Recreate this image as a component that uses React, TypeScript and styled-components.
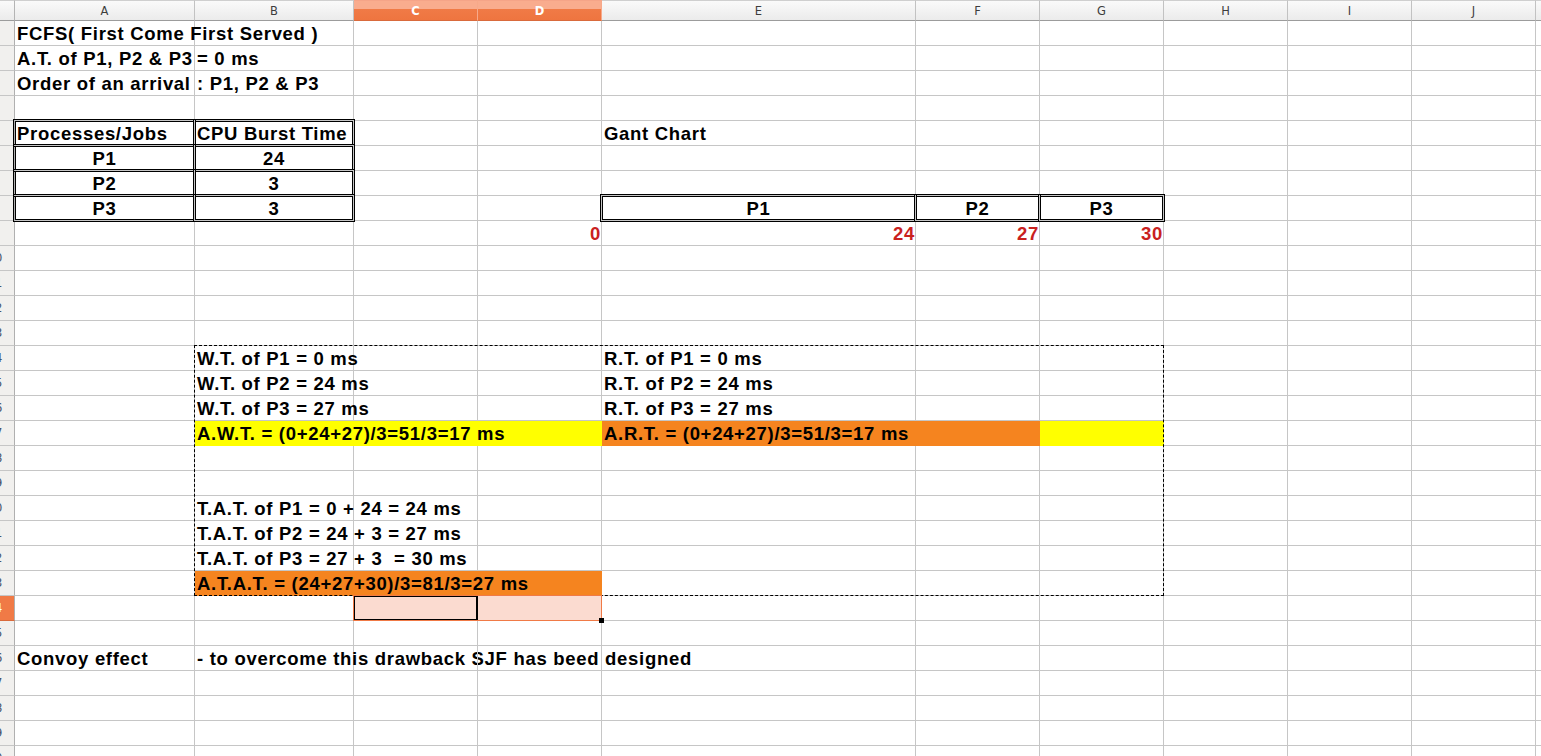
import React from 'react';
import styled, { createGlobalStyle, css } from 'styled-components';

const GRID = '#c6c6c6';
const YELLOW = '#ffff00';
const ORANGE = '#f5841f';
const PINK = '#fbdbd0';
const SEL = '#f07a46';
const RED = '#c9211e';

const COLS = ['A', 'B', 'C', 'D', 'E', 'F', 'G', 'H', 'I', 'J', 'K'];
const WIDTHS = [180, 159, 124, 124, 314, 124, 124, 124, 124, 124, 124];
const ROWS = 30;
const TEMPLATE_COLS = `15px ${WIDTHS.map((w) => `${w}px`).join(' ')}`;
const TEMPLATE_ROWS = `21px repeat(${ROWS}, 25px)`;

type Align = 'left' | 'center' | 'right';
type CellDef = {
  text?: string;
  align?: Align;
  red?: boolean;
  bg?: string;
  span?: number;
  boxed?: boolean;
};

const DATA: Record<string, CellDef> = {
  A1: { text: 'FCFS( First Come First Served )' },
  A2: { text: 'A.T. of P1, P2 & P3' },
  B2: { text: '= 0 ms' },
  A3: { text: 'Order of an arrival' },
  B3: { text: ': P1, P2 & P3' },
  A5: { text: 'Processes/Jobs', boxed: true },
  B5: { text: 'CPU Burst Time', boxed: true },
  E5: { text: 'Gant Chart' },
  A6: { text: 'P1', align: 'center', boxed: true },
  B6: { text: '24', align: 'center', boxed: true },
  A7: { text: 'P2', align: 'center', boxed: true },
  B7: { text: '3', align: 'center', boxed: true },
  A8: { text: 'P3', align: 'center', boxed: true },
  B8: { text: '3', align: 'center', boxed: true },
  E8: { text: 'P1', align: 'center', boxed: true },
  F8: { text: 'P2', align: 'center', boxed: true },
  G8: { text: 'P3', align: 'center', boxed: true },
  D9: { text: '0', align: 'right', red: true },
  E9: { text: '24', align: 'right', red: true },
  F9: { text: '27', align: 'right', red: true },
  G9: { text: '30', align: 'right', red: true },
  B14: { text: 'W.T. of P1 = 0 ms' },
  E14: { text: 'R.T. of P1 = 0 ms' },
  B15: { text: 'W.T. of P2 = 24 ms' },
  E15: { text: 'R.T. of P2 = 24 ms' },
  B16: { text: 'W.T. of P3 = 27 ms' },
  E16: { text: 'R.T. of P3 = 27 ms' },
  B17: { text: 'A.W.T. = (0+24+27)/3=51/3=17 ms', bg: YELLOW, span: 3 },
  E17: { text: 'A.R.T. = (0+24+27)/3=51/3=17 ms', bg: ORANGE, span: 2 },
  G17: { bg: YELLOW },
  B20: { text: 'T.A.T. of P1 = 0 + 24 = 24 ms' },
  B21: { text: 'T.A.T. of P2 = 24 + 3 = 27 ms' },
  B22: { text: 'T.A.T. of P3 = 27 + 3  = 30 ms' },
  B23: { text: 'A.T.A.T. = (24+27+30)/3=81/3=27 ms', bg: ORANGE, span: 3 },
  C24: { bg: PINK },
  D24: { bg: PINK },
  A26: { text: 'Convoy effect' },
  B26: { text: '- to overcome this drawback SJF has beed designed' },
};

const SELECTED_COLS = ['C', 'D'];
const SELECTED_ROW = 24;

const Global = createGlobalStyle`
  *, *::before, *::after { box-sizing: border-box; }
  html, body { margin: 0; padding: 0; background: #fff; overflow: hidden; }
`;

const Window = styled.div`
  display: grid;
  grid-template-columns: 1660px;
  grid-template-rows: 771px;
  width: 1541px;
  height: 756px;
  overflow: hidden;
  background: #fff;
`;

const Sheet = styled.div`
  grid-area: 1 / 1;
  display: grid;
  grid-template-columns: ${TEMPLATE_COLS};
  grid-template-rows: ${TEMPLATE_ROWS};
`;

const Overlay = styled(Sheet)`
  position: relative;
  z-index: 2;
  pointer-events: none;
`;

const Corner = styled.div`
  border-top: 1px solid #cfcfcf;
  border-right: 1px solid #b4b4b4;
  border-bottom: 1px solid #9c9c9c;
  background: linear-gradient(#fafafa, #ebebeb);
`;

const ColHead = styled.div<{ $sel?: boolean }>`
  display: flex;
  align-items: center;
  justify-content: center;
  padding-top: 1px;
  border-top: 1px solid #cfcfcf;
  border-right: 1px solid #c2c2c2;
  border-bottom: 1px solid #9c9c9c;
  background: linear-gradient(#fafafa, #ebebeb);
  font: 11.5px 'DejaVu Sans', sans-serif;
  color: #3d3d3d;
  ${(p) =>
    p.$sel &&
    css`
      background: linear-gradient(#f9ac8e 0, #f9ac8e 8px, #f07a46 8px, #ee7540 100%);
      border-top-color: #f5a488;
      border-right-color: #f7a98a;
      border-bottom-color: #d96a3c;
      color: #fff;
      font-weight: bold;
    `}
`;

const RowHead = styled.div<{ $sel?: boolean }>`
  display: flex;
  align-items: center;
  overflow: hidden;
  background: #f1f0ee;
  border-right: 1px solid #b0b0b0;
  border-bottom: 1px solid ${GRID};
  font: 11.5px 'DejaVu Sans', sans-serif;
  color: #45536b;
  ${(p) =>
    p.$sel &&
    css`
      background: ${SEL};
      border-bottom-color: #d96a3c;
      color: #fff;
    `}
`;

const RowNum = styled.span`
  flex: none;
  width: 40px;
  margin-left: -25px;
  text-align: center;
`;

const Cell = styled.div<{ $span: number; $bg?: string; $align: Align; $boxed?: boolean }>`
  grid-column: span ${(p) => p.$span};
  display: flex;
  align-items: flex-end;
  justify-content: ${(p) =>
    p.$align === 'center' ? 'center' : p.$align === 'right' ? 'flex-end' : 'flex-start'};
  min-width: 0;
  padding: 0 ${(p) => (p.$align === 'right' ? '0' : '2px')} 1px 2px;
  background: ${(p) => p.$bg ?? 'transparent'};
  border-right: 1px solid ${(p) => p.$bg ?? GRID};
  border-bottom: 1px solid ${(p) => p.$bg ?? GRID};
  ${(p) =>
    p.$boxed &&
    css`
      position: relative;
      &::after {
        content: '';
        position: absolute;
        inset: -2px;
        border: 3px double #000;
        pointer-events: none;
      }
    `}
`;

const Text = styled.span<{ $red?: boolean; $clip?: boolean }>`
  flex: none;
  font: bold 18.5px/20px 'Liberation Sans', Arial, sans-serif;
  letter-spacing: 0.7px;
  white-space: pre;
  color: ${(p) => (p.$red ? RED : '#000')};
  ${(p) =>
    p.$clip &&
    css`
      flex: 0 1 auto;
      max-width: 100%;
      overflow: hidden;
    `}
`;

const Marquee = styled.div`
  grid-column: 3 / 9;
  grid-row: 15 / 25;
  margin: -1px 0 0 -1px;
  border: 1px dashed #000;
`;

const Range = styled.div`
  grid-column: 4 / 6;
  grid-row: 25 / 26;
  margin: -1px 0 0 -1px;
  border: 1px solid ${SEL};
  position: relative;
`;

const Handle = styled.span`
  position: absolute;
  right: -3px;
  bottom: -3px;
  width: 5px;
  height: 5px;
  background: #000;
`;

const Cursor = styled.div`
  grid-column: 4 / 5;
  grid-row: 25 / 26;
  margin: -1px 0 0 -1px;
  border: 2px solid #000;
`;

function buildRow(r: number) {
  const out: React.ReactNode[] = [
    <RowHead key={`h${r}`} $sel={r === SELECTED_ROW}>
      <RowNum>{r}</RowNum>
    </RowHead>,
  ];
  let c = 0;
  while (c < COLS.length) {
    const key = `${COLS[c]}${r}`;
    const def = DATA[key] ?? {};
    const span = def.span ?? 1;
    const nextKey = `${COLS[c + span] ?? ''}${r}`;
    const clip = !!DATA[nextKey]?.text;
    out.push(
      <Cell key={key} $span={span} $bg={def.bg} $align={def.align ?? 'left'} $boxed={def.boxed}>
        {def.text ? (
          <Text $red={def.red} $clip={clip}>
            {def.text}
          </Text>
        ) : null}
      </Cell>
    );
    c += span;
  }
  return out;
}

export default function App() {
  return (
    <>
      <Global />
      <Window>
        <Sheet>
          <Corner />
          {COLS.map((l) => (
            <ColHead key={l} $sel={SELECTED_COLS.includes(l)}>
              {l === 'K' ? '' : l}
            </ColHead>
          ))}
          {Array.from({ length: ROWS }, (_, i) => buildRow(i + 1))}
        </Sheet>
        <Overlay>
          <Range>
            <Handle />
          </Range>
          <Marquee />
          <Cursor />
        </Overlay>
      </Window>
    </>
  );
}
